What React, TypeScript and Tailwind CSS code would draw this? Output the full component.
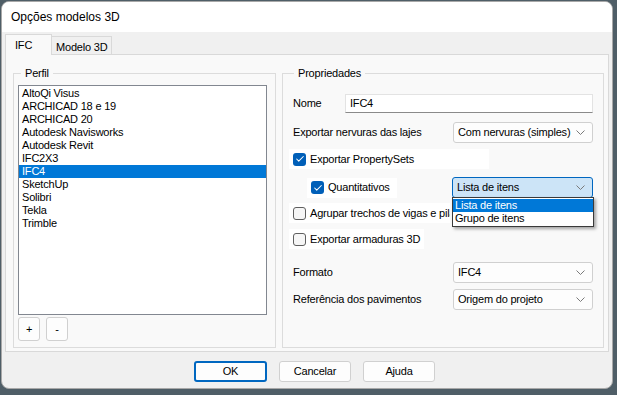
import { Check } from "lucide-react";

const profiles = [
  "AltoQi Visus",
  "ARCHICAD 18 e 19",
  "ARCHICAD 20",
  "Autodesk Navisworks",
  "Autodesk Revit",
  "IFC2X3",
  "IFC4",
  "SketchUp",
  "Solibri",
  "Tekla",
  "Trimble",
];

function Chevron() {
  return (
    <svg width="9" height="5" viewBox="0 0 9 5" className="shrink-0">
      <polyline points="0.5,0.5 4.5,4.5 8.5,0.5" fill="none" stroke="#7a7a7a" strokeWidth="1" />
    </svg>
  );
}

function Select({ value, focused }: { value: string; focused?: boolean }) {
  return (
    <div
      className={
        focused
          ? "flex h-[21px] w-[141px] items-center justify-between rounded-[3px] border border-[#0067c0] bg-[#cce4f7] pl-[4px] pr-[7px]"
          : "flex h-[21px] w-[140px] items-center justify-between rounded-[3px] border border-[#d0d0d0] bg-[#fdfdfd] pl-[4px] pr-[7px]"
      }
    >
      <span>{value}</span>
      <Chevron />
    </div>
  );
}

function CheckBox({ checked, label }: { checked?: boolean; label: string }) {
  return (
    <div className="flex h-[20px] items-center gap-[4px] overflow-hidden whitespace-nowrap bg-white pl-[4px] pr-[4px]">
      {checked ? (
        <span className="flex h-[13px] w-[13px] shrink-0 items-center justify-center rounded-[3px] bg-[#005fb8]">
          <Check size={10} strokeWidth={2.5} color="white" />
        </span>
      ) : (
        <span className="h-[13px] w-[13px] shrink-0 rounded-[3px] border border-[#5f5f5f] bg-[#f6f6f6]" />
      )}
      <span>{label}</span>
    </div>
  );
}

function SmallButton({ label }: { label: string }) {
  return (
    <div className="flex h-[24px] w-[22px] items-center justify-center rounded-[3px] border border-[#d0d0d0] bg-[#fdfdfd] text-[11px]">
      {label}
    </div>
  );
}

function DialogButton({ label, primary }: { label: string; primary?: boolean }) {
  return (
    <div
      className={
        primary
          ? "flex h-[21px] w-[73px] items-center justify-center rounded-[3px] border-2 border-[#0067c0] bg-[#fdfdfd]"
          : "flex h-[21px] w-[72px] items-center justify-center rounded-[3px] border border-[#d0d0d0] bg-[#fdfdfd]"
      }
    >
      {label}
    </div>
  );
}

export default function App() {
  return (
    <div className="h-[395px] w-[617px] overflow-hidden bg-[#4f5e67] font-['Liberation_Sans',Arial,sans-serif] text-[11px] tracking-[-0.2px] text-black">
      <div className="ml-px mt-px flex h-[388px] w-[612px] flex-col overflow-hidden rounded-lg border border-[#a8a8a8] bg-[#f0f0f0]">
        <div className="flex h-[30px] shrink-0 items-center bg-white pl-[9px] text-[12px] tracking-normal">
          Opções modelos 3D
        </div>

        <div className="px-[3px] pt-[1px]">
          <div className="flex h-[21px] items-end">
            <div className="relative z-10 -mb-px flex h-[21px] w-[47px] items-start border border-b-0 border-[#d9d9d9] bg-[#f9f9f9] pl-[9px] pt-[2px]">
              IFC
            </div>
            <div className="flex h-[18px] w-[60px] items-start border-r border-t border-[#d9d9d9] bg-[#f0f0f0] pl-[4px] pt-[2px]">
              Modelo 3D
            </div>
          </div>

          <div className="flex h-[298px] gap-[6px] border border-[#d9d9d9] bg-[#f9f9f9] pl-[7px] pt-[11px]">
            <fieldset className="h-[282px] w-[263px] border border-[#dcdcdc] pl-[4px]">
              <legend className="ml-[3px] px-[4px] leading-[14px]">Perfil</legend>
              <div className="mt-[5px] h-[230px] w-[249px] border border-[#828790] bg-white py-[1px]">
                {profiles.map((p) => (
                  <div
                    key={p}
                    className={
                      p === "IFC4"
                        ? "h-[13px] bg-[#0078d7] pl-[3px] leading-[13px] text-white"
                        : "h-[13px] pl-[3px] leading-[13px]"
                    }
                  >
                    {p}
                  </div>
                ))}
              </div>
              <div className="mt-[2px] flex gap-[6px]">
                <SmallButton label="+" />
                <SmallButton label="-" />
              </div>
            </fieldset>

            <fieldset className="h-[282px] w-[320px] border border-[#dcdcdc] px-[10px]">
              <legend className="ml-[1px] px-[4px] leading-[14px]">Propriedades</legend>

              <div className="mt-[14px] flex h-[19px] items-center">
                <span className="w-[52px]">Nome</span>
                <div className="flex h-[19px] w-[248px] items-center border border-[#e3e3e3] border-b-[#8a8a8a] bg-white pl-[4px]">
                  IFC4
                </div>
              </div>

              <div className="mt-[9px] flex items-center justify-between">
                <span>Exportar nervuras das lajes</span>
                <Select value="Com nervuras (simples)" />
              </div>

              <div className="-ml-[4px] mt-[6px] flex">
                <div className="w-[200px]">
                  <CheckBox checked label="Exportar PropertySets" />
                </div>
              </div>

              <div className="mt-[8px] flex items-center justify-between pl-[14px]">
                <div className="w-[90px]">
                  <CheckBox checked label="Quantitativos" />
                </div>
                <div className="relative z-20">
                  <Select value="Lista de itens" focused />
                  <div className="absolute left-0 top-[20px] w-[142px] border border-[#3a3a3a] bg-white py-px shadow-[2px_2px_3px_rgba(0,0,0,0.35)]">
                    <div className="h-[13px] bg-[#0078d7] pl-[2px] leading-[13px] text-white">Lista de itens</div>
                    <div className="h-[13px] pl-[2px] leading-[13px]">Grupo de itens</div>
                  </div>
                </div>
              </div>

              <div className="-ml-[4px] mt-[5px] flex">
                <div className="w-[161px]">
                  <CheckBox label="Agrupar trechos de vigas e pilares" />
                </div>
              </div>

              <div className="-ml-[4px] mt-[6px] flex">
                <CheckBox label="Exportar armaduras 3D" />
              </div>

              <div className="mt-[13px] flex items-center justify-between">
                <span>Formato</span>
                <Select value="IFC4" />
              </div>

              <div className="mt-[6px] flex items-center justify-between">
                <span>Referência dos pavimentos</span>
                <Select value="Origem do projeto" />
              </div>
            </fieldset>
          </div>
        </div>

        <div className="mt-[9px] flex gap-[12px] pl-[192px]">
          <DialogButton label="OK" primary />
          <DialogButton label="Cancelar" />
          <DialogButton label="Ajuda" />
        </div>
      </div>
    </div>
  );
}
